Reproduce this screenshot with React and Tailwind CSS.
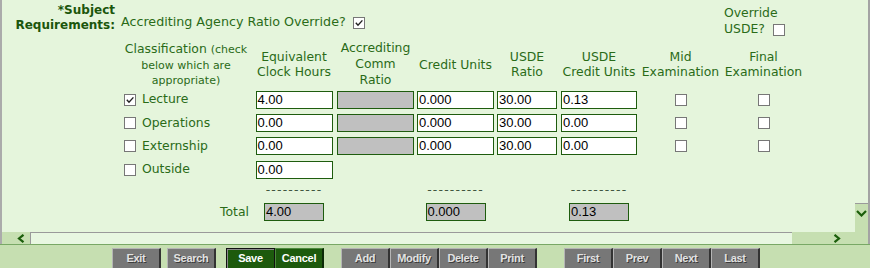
import React from 'react';

const COLS = 'grid grid-cols-[117px_134px_82px_81px_79px_64px_80px_83px_83px]';

const ROWS = [
  { label: 'Lecture', checked: true, hours: '4.00', credit: '0.000', ratio: '30.00', usde: '0.13' },
  { label: 'Operations', hours: '0.00', credit: '0.000', ratio: '30.00', usde: '0.00' },
  { label: 'Externship', hours: '0.00', credit: '0.000', ratio: '30.00', usde: '0.00' },
  { label: 'Outside', hours: '0.00', only: true },
];

function Box({ checked }) {
  return (
    <span className="inline-flex w-[12px] h-[12px] border border-[#777] bg-white items-center justify-center align-middle">
      {checked && (
        <svg width="10" height="10" viewBox="0 0 10 10">
          <path d="M1.8 4.8 L4 7.2 L8.4 2.4" fill="none" stroke="#222" strokeWidth="1.4" />
        </svg>
      )}
    </span>
  );
}

function Field({ value, gray, w = 'w-[77px]' }) {
  return (
    <div
      className={`${w} h-[18px] border border-[#1e5c0e] ${gray ? 'bg-[#c0c0c0]' : 'bg-white'} text-black text-[13px] leading-[16px] pl-[1px] font-['Liberation_Sans',Arial,sans-serif]`}
    >
      {value}
    </div>
  );
}

function Btn({ label, kind, className = '' }) {
  const base = "w-[49px] h-[22px] shrink-0 flex items-center justify-center pb-[1px] text-[11px] font-bold tracking-[-0.3px] font-['Liberation_Sans',Arial,sans-serif]";
  if (kind === 'save') {
    return (
      <div className={`${base} ${className} bg-[#1d5a0d] text-white border border-[#111] shadow-[inset_1px_1px_0_#8a8a8a]`}>
        {label}
      </div>
    );
  }
  if (kind === 'cancel') {
    return (
      <div className={`${base} ${className} bg-[#1d5a0d] text-white border-t border-l border-t-[#4d8a3d] border-l-[#4d8a3d] border-r-2 border-b-2 border-r-[#0b2a06] border-b-[#0b2a06]`}>
        {label}
      </div>
    );
  }
  return (
    <div className={`${base} ${className} bg-[#777] text-[#e2e2e2] [text-shadow:1px_1px_0_#3c3c3c] border-t border-l border-t-[#b5b5b5] border-l-[#b5b5b5] border-r-2 border-b-2 border-r-[#333] border-b-[#333]`}>
      {label}
    </div>
  );
}

const Dash = () => (
  <div className="text-center text-[#3f553f] tracking-[1.2px]">----------</div>
);

export default function App() {
  return (
    <div className="w-[870px] h-[268px] overflow-hidden bg-[#c6dfb1] font-['DejaVu_Sans',Verdana,sans-serif] text-[12.4px] text-[#2a6b18]">
      <div className="flex h-[244px] border-l-2 border-r-2 border-l-[#ababab] border-r-[#a3a3a3] bg-[#e5f5dc]">
        <div className="flex flex-col w-[853px]">
          <div className="h-[232px]">
            {/* top line */}
            <div className={`${COLS} h-[40px]`}>
              <div className="pt-[3px] pr-[4px] text-right font-bold text-[12px] leading-[15px] text-[#1b560c]">
                *Subject<br />Requirements:
              </div>
              <div className="col-span-7 pt-[14px] pl-[2px] leading-[15px] text-[12.7px]">
                Accrediting Agency Ratio Override?
                <span className="ml-[7px]"><Box checked /></span>
              </div>
              <div className="pt-[5px] pl-[2px] leading-[16px]">
                Override<br />USDE?
                <span className="ml-[8px]"><Box /></span>
              </div>
            </div>

            {/* column headers */}
            <div className={`${COLS} h-[48px] items-center text-center`}>
              <div />
              <div className="leading-[14.5px] pt-[2px]">
                Classification <span className="text-[11px]">(check</span>
                <br />
                <span className="text-[11px]">below which are<br />appropriate)</span>
              </div>
              <div className="leading-[15px]">Equivalent<br />Clock Hours</div>
              <div className="leading-[16px]">Accrediting<br />Comm<br />Ratio</div>
              <div className="leading-[15px]">Credit Units</div>
              <div className="leading-[15px]">USDE<br />Ratio</div>
              <div className="leading-[15px]">USDE<br />Credit Units</div>
              <div className="leading-[15px]">Mid<br />Examination</div>
              <div className="leading-[15px]">Final<br />Examination</div>
            </div>

            {/* data rows */}
            {ROWS.map(r => (
              <div key={r.label} className={`${COLS} h-[23.33px] items-center`}>
                <div />
                <div className="flex items-center pl-[5px] gap-[6px]">
                  <Box checked={r.checked} />
                  <span>{r.label}</span>
                </div>
                <div className="flex justify-center"><Field value={r.hours} /></div>
                {r.only ? (
                  <div className="col-span-6" />
                ) : (
                  <>
                    <div className="flex justify-center"><Field gray value="" /></div>
                    <div className="flex justify-center"><Field value={r.credit} /></div>
                    <div className="flex justify-center"><Field w="w-[60px]" value={r.ratio} /></div>
                    <div className="flex justify-center"><Field w="w-[76px]" value={r.usde} /></div>
                    <div className="flex justify-center"><Box /></div>
                    <div className="flex justify-center"><Box /></div>
                  </>
                )}
              </div>
            ))}

            {/* separators */}
            <div className={`${COLS} h-[18px] items-center leading-[18px]`}>
              <div />
              <div />
              <Dash />
              <div />
              <Dash />
              <div />
              <Dash />
            </div>

            {/* totals */}
            <div className={`${COLS} h-[26px] items-center`}>
              <div />
              <div className="text-right pr-[4px]">Total</div>
              <div className="flex justify-center"><Field gray w="w-[60px]" value="4.00" /></div>
              <div />
              <div className="flex justify-center"><Field gray w="w-[60px]" value="0.000" /></div>
              <div />
              <div className="flex justify-center"><Field gray w="w-[60px]" value="0.13" /></div>
            </div>
          </div>

          {/* horizontal scrollbar */}
          <div className="flex h-[12px]">
            <div className="w-[28px] bg-[#c6dfb1] flex items-center pl-[15px]">
              <svg width="8" height="9" viewBox="0 0 8 9">
                <polyline points="6.5,0.8 2,4.5 6.5,8.2" fill="none" stroke="#1b5e0b" strokeWidth="2.2" />
              </svg>
            </div>
            <div className="w-[762px] border-t border-l border-[#9a9a9a] bg-[#e8f7e1]" />
            <div className="flex-1 bg-[#c6dfb1] flex items-center pl-[41px]">
              <svg width="8" height="9" viewBox="0 0 8 9">
                <polyline points="1.5,0.8 6,4.5 1.5,8.2" fill="none" stroke="#1b5e0b" strokeWidth="2.2" />
              </svg>
            </div>
          </div>
        </div>

        {/* vertical scrollbar */}
        <div className="w-[13px] flex flex-col">
          <div className="h-[203px]" />
          <div className="flex-1 border-t border-[#9a9a9a] bg-[#c6dfb1] flex justify-center pt-[6px]">
            <svg width="11" height="7" viewBox="0 0 11 7">
              <polyline points="1,1 5.5,5.5 10,1" fill="none" stroke="#1b5e0b" strokeWidth="2.2" />
            </svg>
          </div>
        </div>
      </div>

      <div className="h-px bg-[#78a865]" />

      {/* button bar */}
      <div className="flex pt-[3px]">
        <Btn label="Exit" className="ml-[112px]" />
        <Btn label="Search" className="ml-[6px]" />
        <Btn label="Save" kind="save" className="ml-[10px]" />
        <Btn label="Cancel" kind="cancel" />
        <Btn label="Add" className="ml-[17px]" />
        <Btn label="Modify" />
        <Btn label="Delete" />
        <Btn label="Print" />
        <Btn label="First" className="ml-[27px]" />
        <Btn label="Prev" />
        <Btn label="Next" />
        <Btn label="Last" />
      </div>
    </div>
  );
}
